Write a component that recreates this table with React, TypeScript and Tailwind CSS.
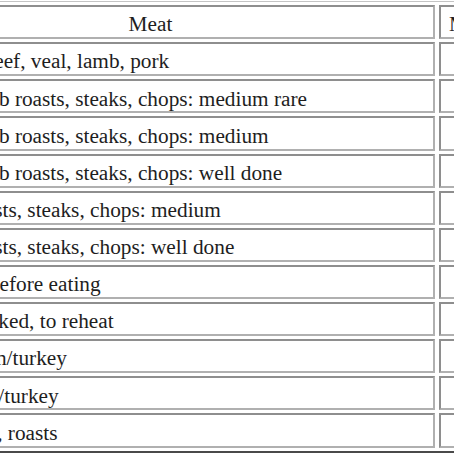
const rows: [string, string][] = [
  ["Lean ground beef, veal, lamb, pork", "160 °F"],
  ["Beef, veal, lamb roasts, steaks, chops: medium rare", "145 °F"],
  ["Beef, veal, lamb roasts, steaks, chops: medium", "160 °F"],
  ["Beef, veal, lamb roasts, steaks, chops: well done", "170 °F"],
  ["Fresh pork roasts, steaks, chops: medium", "160 °F"],
  ["Fresh pork roasts, steaks, chops: well done", "170 °F"],
  ["Ham, cooked before eating", "160 °F"],
  ["Ham, fully cooked, to reheat", "140 °F"],
  ["Ground chicken/turkey", "165 °F"],
  ["Whole chicken/turkey", "180 °F"],
  ["Poultry breasts, roasts", "170 °F"],
]

const cell =
  "h-[34.13px] border-2 border-t-[#8e8e8e] border-l-[#8e8e8e] border-b-[#b0b0b0] border-r-[#b0b0b0] pr-[2px] pt-[6px] pb-0 whitespace-nowrap align-middle"

export default function App() {
  return (
    <div className="w-[454px] h-[454px] overflow-hidden bg-white pt-px">
      <table
        className="w-max -ml-[139px] border-separate border-spacing-x-[4px] border-spacing-y-[3px] border border-t-[#c4c4c4] border-l-[#c4c4c4] border-b-2 border-b-[#4a4a4a] border-r-[#4a4a4a] text-[21.3px] leading-[1.1] text-[#1e1e1e]"
        style={{ fontFamily: "'Liberation Serif', 'Times New Roman', serif" }}
      >
        <thead>
          <tr>
            <th className={`${cell} w-[569px] pl-[2px] text-center font-normal`}>Meat</th>
            <th className={`${cell} pl-[8px] text-center font-normal`}>Minimum Internal Temperature</th>
          </tr>
        </thead>
        <tbody>
          {rows.map(([meat, temp]) => (
            <tr key={meat}>
              <td className={`${cell} pl-[2px] text-left`}>{meat}</td>
              <td className={`${cell} pl-[8px] text-center`}>{temp}</td>
            </tr>
          ))}
        </tbody>
      </table>
    </div>
  )
}
